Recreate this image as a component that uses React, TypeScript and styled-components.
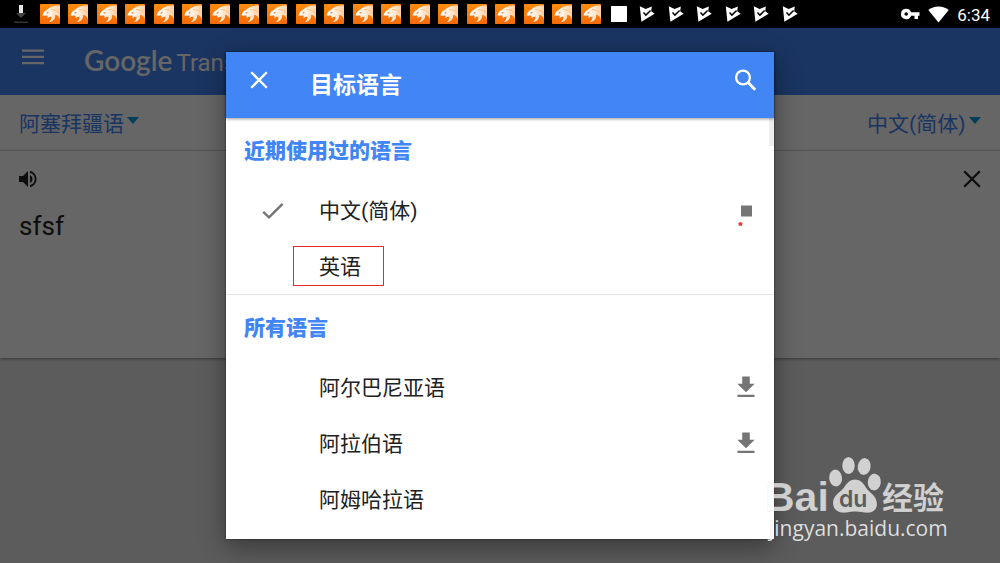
import React from 'react';
import styled, { createGlobalStyle } from 'styled-components';

const GlobalStyle = createGlobalStyle`
  * { box-sizing: border-box; }
  html, body { margin: 0; padding: 0; background: #e6e6e6; }
  body, button, select, textarea {
    font-family: Roboto, "Noto Sans CJK SC", sans-serif;
  }
  button, select, textarea {
    margin: 0; padding: 0; border: 0; background: none; color: inherit; outline: none;
  }
  h1, h2, ul { margin: 0; padding: 0; }
  ul { list-style: none; }
  svg { display: block; flex: none; }
`;

const Screen = styled.div`
  display: flex;
  flex-direction: column;
  min-height: 100vh;
`;

const StatusBar = styled.header`
  display: flex;
  align-items: center;
  height: 28px;
  padding: 0 10px 0 7px;
  background: #000;
  color: #fff;
`;

const Notifications = styled.div`
  flex: 1;
  display: grid;
  grid-template-columns: repeat(28, 1fr);
  align-items: center;
  justify-items: center;
`;

const SystemIcons = styled.div`
  display: flex;
  align-items: center;
  justify-content: flex-end;
  gap: 8px;
  width: 186px;
`;

const Clock = styled.span`
  font-size: 17px;
  line-height: 28px;
  padding-top: 2px;
`;

const Stage = styled.div`
  position: relative;
  flex: 1;
  display: flex;
  flex-direction: column;
`;

const Page = styled.main`
  flex: 1;
`;

const AppBar = styled.div`
  display: flex;
  align-items: center;
  gap: 40px;
  height: 67px;
  padding: 0 22px 10px;
  background: #4285f4;
  color: #fff;
`;

const AppName = styled.h1`
  display: flex;
  align-items: baseline;
  gap: 4px;
  padding-top: 10px;
  font-size: 24px;
  line-height: 32px;
  font-weight: 400;
`;

const Brand = styled.span`
  font-family: Lato, sans-serif;
  font-size: 28px;
  font-weight: 600;
`;

const LanguageBar = styled.div`
  display: flex;
  align-items: center;
  justify-content: space-between;
  height: 56px;
  padding: 0 19px;
  background: #fff;
  border-bottom: 1px solid #dcdcdc;
`;

const LanguagePicker = styled.label`
  display: flex;
  align-items: center;
  gap: 3px;
  padding-top: 2px;
  color: #4285f4;
`;

const LanguageSelect = styled.select`
  appearance: none;
  font-size: 21px;
  line-height: 32px;
`;

const Caret = styled.span`
  margin-bottom: 6px;
  border: 6px solid transparent;
  border-top: 7px solid #039be5;
  border-bottom: 0;
`;

const InputPanel = styled.section`
  height: 207px;
  padding: 16px 19px;
  background: #fff;
  color: #212121;
  box-shadow: 0 1px 3px rgba(0, 0, 0, 0.4);
`;

const InputTools = styled.div`
  display: flex;
  align-items: center;
  justify-content: space-between;
  height: 24px;
`;

const SourceText = styled.textarea`
  display: block;
  width: 100%;
  height: 64px;
  margin-top: 19px;
  font-size: 26px;
  line-height: 32px;
  resize: none;
`;

const IconButton = styled.button`
  display: flex;
  align-items: center;
  justify-content: center;
`;

const Overlay = styled.div`
  position: absolute;
  inset: 0;
  display: flex;
  justify-content: center;
  padding: 24px;
  background: rgba(0, 0, 0, 0.6);
`;

const Dialog = styled.div`
  position: relative;
  display: flex;
  flex-direction: column;
  width: 100%;
  max-width: 548px;
  background: #fff;
  color: #212121;
  box-shadow: 0 8px 24px rgba(0, 0, 0, 0.4), 0 0 2px rgba(0, 0, 0, 0.5);
`;

const DialogBar = styled.div`
  position: relative;
  z-index: 1;
  display: flex;
  align-items: center;
  height: 66px;
  padding: 0 17px 10px 24px;
  background: #4285f4;
  color: #fff;
  box-shadow: 0 1px 3px rgba(0, 0, 0, 0.4);
`;

const DialogTitle = styled.h2`
  flex: 1;
  padding: 11px 0 0 42px;
  font-size: 23px;
  line-height: 32px;
  font-weight: 700;
`;

const LanguageList = styled.div`
  position: relative;
  flex: 1;
`;

const Section = styled.section<{ $divided?: boolean }>`
  border-bottom: ${(p) => (p.$divided ? '1px solid #e4e4e4' : '0')};
  height: ${(p) => (p.$divided ? '177px' : 'auto')};
`;

const SectionTitle = styled.h2`
  padding: 2px 18px 0;
  font-size: 21px;
  line-height: 63px;
  font-weight: 900;
  color: #4285f4;
`;

const Row = styled.li`
  display: flex;
  align-items: center;
  height: 56px;
  padding-right: 14px;
`;

const Choice = styled.button`
  flex: 1;
  display: flex;
  align-items: center;
  height: 56px;
  font-size: 21px;
  line-height: 32px;
  text-align: left;
`;

const Mark = styled.span`
  display: flex;
  justify-content: center;
  width: 93px;
`;

const Name = styled.span<{ $boxed?: boolean }>`
  position: relative;
  &::after {
    content: '';
    display: ${(p) => (p.$boxed ? 'block' : 'none')};
    position: absolute;
    inset: -5px -23px -3px -26px;
    border: 1px solid #e8242c;
  }
`;

const ScrollThumb = styled.span`
  position: absolute;
  top: 0;
  right: 0;
  width: 5px;
  height: 28px;
  background: #eee;
`;

const Watermark = styled.div`
  position: absolute;
  right: 46px;
  bottom: 13px;
`;

const CrossIcon = () => (
  <svg width="18" height="18" viewBox="0 0 18 18" stroke="currentColor" strokeWidth="2.3">
    <path d="M1.2 1.2 16.8 16.8M16.8 1.2 1.2 16.8" />
  </svg>
);

const DownloadIcon = () => (
  <svg width="28" height="28" viewBox="0 0 28 28" fill="#757575">
    <path d="M10.2 2.600h7.600v7.200h4.900L14 18.200 5.300 9.800h4.900zM5.500 20.700h17v2.400h-17z" />
  </svg>
);

const StopIcon = () => (
  <svg width="28" height="28" viewBox="0 0 28 28" overflow="visible">
    <path d="M9 8.500h11v11H9z" fill="#757575" />
    <path d="M6.300 26 8.800 25l1.800 1.300-.8 2.600-3.200-.3z" fill="#db4437" />
  </svg>
);

const CheckIcon = () => (
  <svg width="22" height="18" viewBox="0 0 22 18" fill="none" stroke="#757575" strokeWidth="2.400">
    <path d="M1.200 9.800 7 15.400 20.600 1.800" />
  </svg>
);

const CheetahIcon = () => (
  <svg width="20" height="20" viewBox="0 0 20 20">
    <defs>
      <linearGradient id="cheetah" x1="0" y1="0" x2="0" y2="1">
        <stop offset="0" stopColor="#ff8c0e" />
        <stop offset="1" stopColor="#f56a08" />
      </linearGradient>
      <linearGradient id="fur" x1="0" y1="0" x2="1" y2="0">
        <stop offset="0" stopColor="#fff" />
        <stop offset="0.5" stopColor="#ffeedd" />
        <stop offset="1" stopColor="#ffcf9f" />
      </linearGradient>
    </defs>
    <rect width="20" height="20" rx="0.8" fill="url(#cheetah)" />
    <path
      d="M2.500 11.500c.5-2.500 2-4.500 4.500-5.700C9 3.500 13 1.500 20 1.500V15.500c-.8-3-2.500-4.500-4.800-4.800.4 3.400-1.800 6.800-6.400 7.300 2-1.500 2.900-3.200 2.700-5.300-1.500-.2-2.700.2-3.800 1.300-.5-.8-.3-1.500.2-2.100-1.100-.2-1.800.2-2.400.2-.8 0-1.200-.2-1.500-.6z"
      fill="url(#fur)"
    />
    <path d="M6 9l2.800-1.300-.9 1.700zM3.500 12l3.800-.8-1.500 1.200z" fill="#d96a1e" />
    <path d="M11 5.500c4 .1 7 1.500 9 4" fill="none" stroke="#ffc48c" strokeWidth="1.200" />
  </svg>
);

const PlayCheckIcon = () => (
  <svg width="16" height="16" viewBox="0 0 16 16">
    <path d="M.8.3 6.600 3 12.800.6l-.6 4.600 3.500 2.500L2.400 15.800z" fill="#fff" />
    <path d="M4.500 6.600l2.400 2.500 4.700-4.600" fill="none" stroke="#000" strokeWidth="1.500" />
  </svg>
);

const BaiduMark = () => (
  <svg width="190" height="96" viewBox="764 454 190 96" fill="#fff" fillOpacity="0.72">
    <g stroke="#000" strokeOpacity="0.07" strokeWidth="1">
      <text x="765" y="511" fontFamily="Liberation Sans, sans-serif" fontWeight="700" fontSize="41">
        Bai
      </text>
      <ellipse cx="835.600" cy="478" rx="6.500" ry="8.500" transform="rotate(-6 835.600 478)" />
      <ellipse cx="848.500" cy="465.500" rx="6.300" ry="8.600" />
      <ellipse cx="864.200" cy="466.500" rx="6.500" ry="8.500" transform="rotate(10 864.200 466.500)" />
      <ellipse cx="874.300" cy="482" rx="6.600" ry="8.400" transform="rotate(6 874.300 482)" />
      <path d="M855 479.500c5 0 8.500 3.500 11 8 3 5 11 8 11 16.500 0 6-4.500 9-10 8.700-4-.2-8-1.200-12-1.200s-7 1.200-11 1.200c-6.500 0-11-3.500-11-9.700 0-8 7-10.500 11-15.500 3-4.500 6-8 11-8z" />
      <text x="882" y="509" fontFamily="Noto Sans CJK SC, sans-serif" fontWeight="700" fontSize="31">
        经验
      </text>
      <text x="769" y="536" fontFamily="Open Sans, sans-serif" fontSize="21" fillOpacity="0.85">
        jingyan.baidu.com
      </text>
    </g>
    <text
      x="839"
      y="507"
      fontFamily="Inter, sans-serif"
      fontWeight="600"
      fontSize="23"
      fill="#5c5c5c"
      fillOpacity="1"
    >
      du
    </text>
  </svg>
);

type Language = { name: string; checked?: boolean; boxed?: boolean; action?: 'stop' | 'download' };

const recent: Language[] = [
  { name: '中文(简体)', checked: true, action: 'stop' },
  { name: '英语', boxed: true },
];

const all: Language[] = [
  { name: '阿尔巴尼亚语', action: 'download' },
  { name: '阿拉伯语', action: 'download' },
  { name: '阿姆哈拉语' },
];

const Rows = ({ items }: { items: Language[] }) => (
  <ul>
    {items.map((item) => (
      <Row key={item.name}>
        <Choice type="button">
          <Mark>{item.checked && <CheckIcon />}</Mark>
          <Name $boxed={item.boxed}>{item.name}</Name>
        </Choice>
        {item.action && (
          <IconButton type="button" aria-label={item.action}>
            {item.action === 'stop' ? <StopIcon /> : <DownloadIcon />}
          </IconButton>
        )}
      </Row>
    ))}
  </ul>
);

export default function App() {
  return (
    <Screen>
      <GlobalStyle />
      <StatusBar>
        <Notifications>
          <svg width="14" height="20" viewBox="0 0 14 20">
            <path d="M5 1h4v8H5z" fill="#e8e8e8" />
            <path d="M2 9h10l-5 5z" fill="#444" />
            <path d="M0 17.500h14v1.500H0z" fill="#333" />
          </svg>
          {Array.from({ length: 20 }, (_, i) => (
            <CheetahIcon key={i} />
          ))}
          <svg width="16" height="16" viewBox="0 0 16 16">
            <rect width="16" height="16" rx="0.5" fill="#fff" />
          </svg>
          {Array.from({ length: 6 }, (_, i) => (
            <PlayCheckIcon key={i} />
          ))}
        </Notifications>
        <SystemIcons>
          <svg width="19" height="12" viewBox="0 0 19 12" fill="#fff">
            <path
              fillRule="evenodd"
              d="M5.200.8a5.200 5.200 0 0 1 4.900 3.400H18.500v3.500H17V11h-3.500V7.700h-3.400A5.200 5.200 0 1 1 5.200.8zm0 3.400a1.800 1.800 0 1 0 0 3.600 1.800 1.800 0 0 0 0-3.600z"
            />
          </svg>
          <svg width="21" height="17" viewBox="0 0 21 17" fill="#fff">
            <path d="M10.500 16.500.3 4C3 1.800 6.500.5 10.500.5S18 1.800 20.700 4z" />
          </svg>
          <Clock>6:34</Clock>
        </SystemIcons>
      </StatusBar>

      <Stage>
        <Page>
          <AppBar>
            <IconButton type="button" aria-label="菜单">
              <svg width="22" height="16" viewBox="0 0 22 16" fill="currentColor">
                <path d="M0 .5h22v2.300H0zM0 6.800h22v2.300H0zM0 13h22v2.300H0z" />
              </svg>
            </IconButton>
            <AppName>
              <Brand>Google</Brand>
              <span>Translate</span>
            </AppName>
          </AppBar>
          <LanguageBar>
            <LanguagePicker>
              <LanguageSelect aria-label="源语言">
                <option>阿塞拜疆语</option>
              </LanguageSelect>
              <Caret />
            </LanguagePicker>
            <LanguagePicker>
              <LanguageSelect aria-label="译文语言">
                <option>中文(简体)</option>
              </LanguageSelect>
              <Caret />
            </LanguagePicker>
          </LanguageBar>
          <InputPanel>
            <InputTools>
              <IconButton type="button" aria-label="朗读">
                <svg width="18" height="18" viewBox="0 0 18 18" fill="currentColor">
                  <path d="M0 6v6h4l5 5V1L4 6zM11 5v8c1.500-.7 2.500-2.200 2.500-4S12.500 5.700 11 5zM11 .8v2.100a6.300 6.300 0 0 1 0 12.200v2.100A8.400 8.400 0 0 0 11 .8z" />
                </svg>
              </IconButton>
              <IconButton type="button" aria-label="清除">
                <CrossIcon />
              </IconButton>
            </InputTools>
            <SourceText aria-label="原文" defaultValue="sfsf" spellCheck={false} />
          </InputPanel>
        </Page>

        <Overlay>
          <Dialog role="dialog" aria-label="目标语言">
            <DialogBar>
              <IconButton type="button" aria-label="关闭">
                <CrossIcon />
              </IconButton>
              <DialogTitle>目标语言</DialogTitle>
              <IconButton type="button" aria-label="搜索">
                <svg width="23" height="23" viewBox="0 0 23 23" fill="none" stroke="currentColor">
                  <circle cx="9" cy="8.500" r="6.900" strokeWidth="2.300" />
                  <path d="M14 13.500l7.200 7.200" strokeWidth="3" />
                </svg>
              </IconButton>
            </DialogBar>
            <LanguageList>
              <Section $divided>
                <SectionTitle>近期使用过的语言</SectionTitle>
                <Rows items={recent} />
              </Section>
              <Section>
                <SectionTitle>所有语言</SectionTitle>
                <Rows items={all} />
              </Section>
              <ScrollThumb />
            </LanguageList>
          </Dialog>
        </Overlay>
        <Watermark>
          <BaiduMark />
        </Watermark>
      </Stage>
    </Screen>
  );
}
